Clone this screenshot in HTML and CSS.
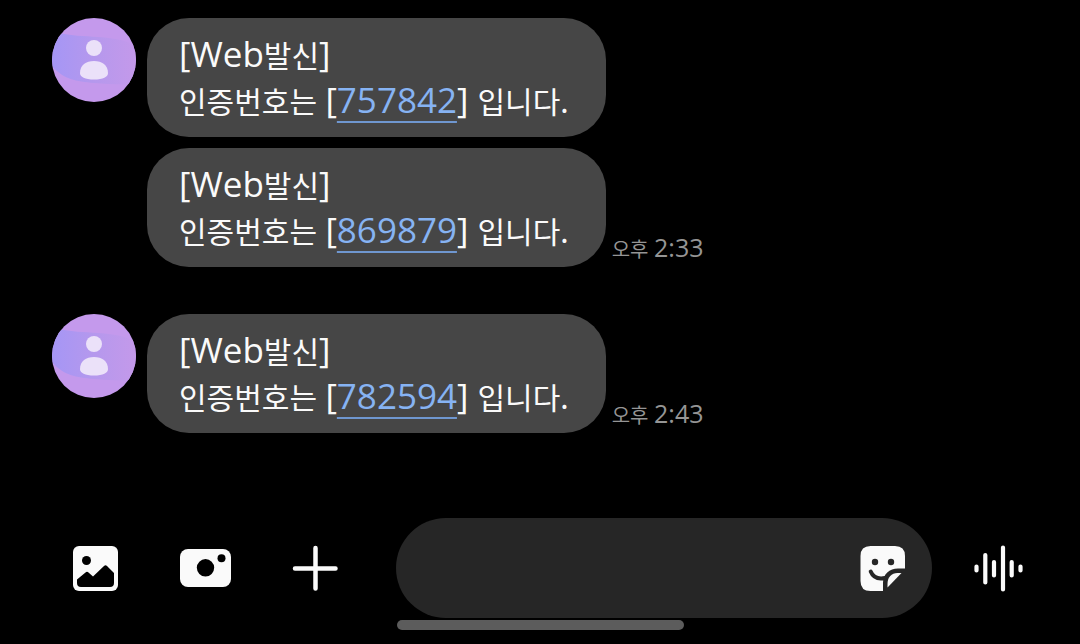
FILE: index.html
```html
<!DOCTYPE html>
<html lang="ko">

<head>
    <meta charset="UTF-8">
    <meta name="viewport" content="width=device-width, initial-scale=1.0">
    <title>메시지</title>
    <link rel="stylesheet" href="styles.css">
</head>

<body>
    <main class="thread">
        <section class="group">
            <svg class="avatar" viewBox="0 0 84 84" aria-hidden="true">
                <defs>
                    <linearGradient id="wave">
                        <stop offset="0" stop-color="#a596f5" />
                        <stop offset="0.5" stop-color="#b598ed" />
                        <stop offset="1" stop-color="#c499ea" />
                    </linearGradient>
                    <clipPath id="round">
                        <circle cx="42" cy="42" r="42" />
                    </clipPath>
                </defs>
                <g id="person" clip-path="url(#round)">
                    <path fill="#c499ec" d="M0 0h84v84H0z" />
                    <path fill="url(#wave)" d="M0 14C20 18 32 18 46 19C64 20 76 23 84 28V66C68 67 56 66 42 65C24 63 12 62 0 48Z" />
                    <circle cx="42" cy="30" r="8" fill="#ebe1f9" />
                    <path fill="#ebe1f9" d="M28 55C28 47 34 43 42 43S56 47 56 55C56 59 51 61.500 42 61.500S28 59 28 55Z" />
                </g>
            </svg>
            <div class="messages">
                <div class="message">
                    <p class="bubble"><span class="latin">[Web</span>발신<span class="latin">]</span><br>인증번호는 <span class="latin">[<a href="#">757842</a>] </span>입니다.</p>
                </div>
                <div class="message">
                    <p class="bubble"><span class="latin">[Web</span>발신<span class="latin">]</span><br>인증번호는 <span class="latin">[<a href="#">869879</a>] </span>입니다.</p>
                    <time datetime="14:33">오후 <span class="clock">2:33</span></time>
                </div>
            </div>
        </section>

        <section class="group">
            <svg class="avatar" viewBox="0 0 84 84" aria-hidden="true">
                <use href="#person" />
            </svg>
            <div class="messages">
                <div class="message">
                    <p class="bubble"><span class="latin">[Web</span>발신<span class="latin">]</span><br>인증번호는 <span class="latin">[<a href="#">782594</a>] </span>입니다.</p>
                    <time datetime="14:43">오후 <span class="clock">2:43</span></time>
                </div>
            </div>
        </section>
    </main>

    <form class="composer">
        <button type="button" class="tool" aria-label="갤러리">
            <svg width="46" height="46" viewBox="0 0 46 46">
                <rect x="1" y="1" width="45" height="45" rx="6" fill="#fafafa" />
                <circle cx="14.500" cy="15.500" r="4.500" />
                <path d="M5 34.500L13.500 27.500Q15 26 16.500 27.500L21 31.500L32 21Q33.500 19.500 35 21L42 28V38Q42 42 38 42H9Q5 42 5 38Z" />
            </svg>
        </button>
        <button type="button" class="tool" aria-label="카메라">
            <svg width="52" height="46" viewBox="0 0 52 46">
                <rect x="1" y="4" width="51" height="38" rx="8" fill="#fafafa" />
                <circle cx="26.500" cy="22.800" r="8.700" />
                <circle cx="42.500" cy="13.200" r="4" />
            </svg>
        </button>
        <button type="button" class="tool" aria-label="더보기">
            <svg width="46" height="46" viewBox="0 0 46 46" stroke="#fafafa" stroke-width="4.500" stroke-linecap="round">
                <path d="M23.500 3V43.500M3 23.500H43.500" />
            </svg>
        </button>
        <div class="field">
            <input type="text" aria-label="메시지 입력">
            <button type="button" class="sticker" aria-label="스티커">
                <svg width="46" height="46" viewBox="0 0 46 46">
                    <path fill="#fafafa" d="M10.500 1H35Q45 1 45 11V23.500H38C29.500 23.500 23 29 23 38V46H10.500Q0.500 46 0.500 36V11Q0.500 1 10.500 1Z" />
                    <circle cx="15" cy="17" r="3.200" fill="#262626" />
                    <circle cx="31" cy="17" r="3.200" fill="#262626" />
                    <path fill="none" stroke="#262626" stroke-width="4" stroke-linecap="round" d="M10.700 26.500C13 32 18 34.500 25 33" />
                    <path fill="#fafafa" d="M27.500 42.500V39C27.500 32 31.500 28 37.500 28H41.500Z" />
                </svg>
            </button>
        </div>
        <button type="button" class="tool" aria-label="음성 메시지">
            <svg width="50" height="48" viewBox="0 0 50 48" stroke="#fafafa" stroke-width="4.200" stroke-linecap="round">
                <path d="M2.500 22.500V26.500M11.300 11V38.500M20 18V31.500M29 3.500V45.500M37.700 18V31.500M46.500 22.500V26.500" />
            </svg>
        </button>
    </form>

    <div class="home-bar"></div>
</body>

</html>
```

FILE: styles.css
```css
* {
    box-sizing: border-box;
}

body {
    display: flex;
    flex-direction: column;
    min-height: 100vh;
    margin: 0;
    background-color: #000;
    color: #fafafa;
    font-family: "Noto Sans CJK KR", sans-serif;
}

.thread {
    display: flex;
    flex: 1;
    flex-direction: column;
    gap: 47px;
    padding: 18px 52px;
}

.group {
    display: flex;
    align-items: flex-start;
    gap: 11px;
}

.avatar {
    flex: none;
    width: 84px;
    height: 84px;
}

.messages {
    display: flex;
    flex-direction: column;
    align-items: flex-start;
    gap: 11px;
}

.message {
    display: flex;
    align-items: flex-end;
    gap: 6px;
}

.bubble {
    margin: 0;
    padding: 13px 37px 14px 32px;
    border-radius: 42px;
    background-color: #464646;
    font-size: 30px;
    line-height: 46px;
}

/* latin letters and digits are drawn larger than the hangul */
.latin {
    font-family: "Open Sans", sans-serif;
    font-size: 35px;
    line-height: 1;
}

.bubble a {
    color: #86b3f3;
    text-decoration: underline;
    text-decoration-color: #6f97d0;
    text-decoration-thickness: 2px;
    text-underline-offset: 8px;
}

time {
    padding-bottom: 3px;
    color: #959595;
    font-size: 20px;
    line-height: 30px;
}

.clock {
    font-family: "Open Sans", sans-serif;
    font-size: 25px;
    line-height: 1;
}

.composer {
    display: flex;
    align-items: center;
    padding: 0 26px 0 40px;
}

button {
    display: flex;
    align-items: center;
    justify-content: center;
    padding: 0;
    border: none;
    background: none;
    cursor: pointer;
}

.tool {
    flex: none;
    width: 110px;
    height: 100px;
}

.field {
    display: flex;
    flex: 1;
    align-items: center;
    height: 100px;
    margin: 0 12px 0 26px;
    padding: 0 26px 0 40px;
    border-radius: 50px;
    background-color: #262626;
}

.field input {
    flex: 1;
    min-width: 0;
    height: 60px;
    border: none;
    outline: none;
    background: none;
    color: #fafafa;
    font-family: inherit;
    font-size: 30px;
}

.home-bar {
    width: 287px;
    height: 10px;
    margin: 2px auto 14px;
    border-radius: 5px;
    background-color: #5c5c5c;
}
```
